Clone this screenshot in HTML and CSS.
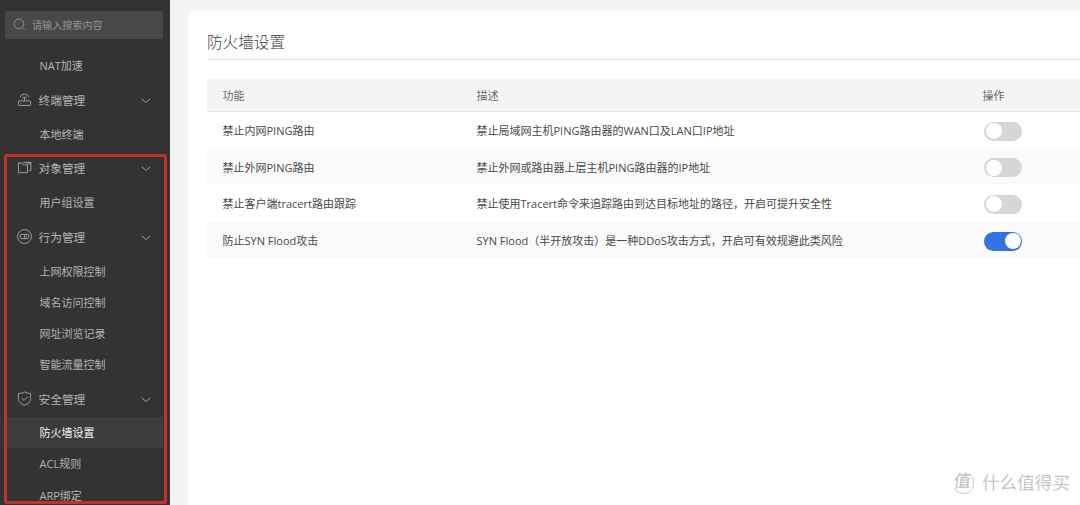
FILE: index.html
```html
<!DOCTYPE html>
<html lang="zh-CN">
<head>
<meta charset="utf-8">
<title>防火墙设置</title>
<link rel="stylesheet" href="styles.css">
</head>
<body>
<div class="app">
  <aside class="sidebar">
    <div class="search">
      <svg class="search-icon" viewBox="0 0 14 14"><circle cx="6.4" cy="6.4" r="5.2"/><path d="M10.100 10.300 12.600 12.900"/></svg>
      <span>请输入搜索内容</span>
    </div>
    <nav class="menu">
      <a class="item">NAT加速</a>
      <div class="group">
        <svg class="icon" viewBox="0 0 16 16"><rect x="1.500" y="9.500" width="13" height="4.800" rx="1"/><path d="M8 9.500V6M3.300 5.500a5 5 0 0 1 9.400 0M5.500 7a2.800 2.800 0 0 1 5 0M4 12h.8"/></svg>
        <span class="label">终端管理</span>
        <svg class="chevron" viewBox="0 0 10 6"><path d="m.7.8 4.3 3.700L9.300.8"/></svg>
      </div>
      <a class="item">本地终端</a>
      <div class="group">
        <svg class="icon" viewBox="0 0 16 16"><path d="M1.500 3.200h3.600l1.500 2h4.600v8.300H1.500zM6.500 2.500h8.300v8.800h-1.600M10 2.500l1.200 1.600h3.600"/></svg>
        <span class="label">对象管理</span>
        <svg class="chevron" viewBox="0 0 10 6"><path d="m.7.8 4.3 3.700L9.300.8"/></svg>
      </div>
      <a class="item">用户组设置</a>
      <div class="group">
        <svg class="icon" viewBox="0 0 16 16"><circle cx="8" cy="8" r="7.400"/><rect x="3.300" y="5.700" width="9.400" height="4.600" rx="2"/><path d="M8.200 5.700v4.600M10.300 7.200v1.600"/></svg>
        <span class="label">行为管理</span>
        <svg class="chevron" viewBox="0 0 10 6"><path d="m.7.8 4.3 3.700L9.300.8"/></svg>
      </div>
      <a class="item">上网权限控制</a>
      <a class="item">域名访问控制</a>
      <a class="item">网址浏览记录</a>
      <a class="item">智能流量控制</a>
      <div class="group">
        <svg class="icon" viewBox="0 0 16 16"><path d="M8 .9c1.800 1.200 4 1.700 6.500 1.700v5.600c0 3.200-2.500 5.400-6.500 7-4-1.600-6.500-3.800-6.500-7V2.600C4 2.600 6.200 2.100 8 .9zM4.900 7.500l2.600 2.500 4.200-4.200"/></svg>
        <span class="label">安全管理</span>
        <svg class="chevron" viewBox="0 0 10 6"><path d="m.7.8 4.3 3.700L9.300.8"/></svg>
      </div>
      <a class="item active">防火墙设置</a>
      <a class="item">ACL规则</a>
      <a class="item">ARP绑定</a>
    </nav>
    <div class="highlight"></div>
  </aside>
  <main class="content">
    <section class="panel">
      <h1 class="title">防火墙设置</h1>
      <div class="table">
        <div class="row head"><span>功能</span><span>描述</span><span>操作</span></div>
        <div class="row"><span>禁止内网PING路由</span><span>禁止局域网主机PING路由器的WAN口及LAN口IP地址</span><i class="switch"></i></div>
        <div class="row alt"><span>禁止外网PING路由</span><span>禁止外网或路由器上层主机PING路由器的IP地址</span><i class="switch"></i></div>
        <div class="row"><span>禁止客户端tracert路由跟踪</span><span>禁止使用Tracert命令来追踪路由到达目标地址的路径，开启可提升安全性</span><i class="switch"></i></div>
        <div class="row alt"><span>防止SYN Flood攻击</span><span>SYN Flood（半开放攻击）是一种DDoS攻击方式，开启可有效规避此类风险</span><i class="switch on"></i></div>
      </div>
    </section>
  </main>
  <div class="watermark">
    <span class="seal"><svg class="seal-ring" viewBox="0 0 24 24"><path d="M2.500 18.500A10.600 10.600 0 0 0 22.500 13Q23 7 18.500 3.200"/></svg><b>值</b></span>
    <span>什么值得买</span>
  </div>
</div>
</body>
</html>
```
FILE: styles.css
```css
* { box-sizing: border-box; }
body {
  margin: 0;
  font-family: "Open Sans", "Noto Sans CJK SC", sans-serif;
  font-size: 11px;
  overflow: hidden;
}
svg { fill: none; stroke: currentColor; flex: none; }
.app {
  position: relative;
  display: flex;
  width: 1080px;
  height: 505px;
  overflow: hidden;
  background: #f4f4f4;
}
.sidebar {
  position: relative;
  flex: none;
  width: 170px;
  padding: 11px 6px 0 5px;
  background: #333;
  color: #b4b4b4;
  overflow: hidden;
}
.search {
  display: flex;
  align-items: center;
  gap: 6px;
  width: 158px;
  height: 28px;
  padding: 0 0 2px 8px;
  border-radius: 2px;
  background: #484848;
  color: #969696;
  font-size: 10.1px;
}
.search-icon { width: 13px; height: 13px; margin-top: 1px; }
.menu { padding: 10.6px 0 0 2px; }
.item, .group { display: flex; align-items: center; white-space: nowrap; }
.item { width: 156px; height: 31.1px; padding-left: 32.5px; }
.item.active { background: #3c3c3c; color: #f5f5f5; }
.group { height: 37.4px; padding-left: 10.5px; font-size: 11.7px; }
.icon { width: 15px; height: 15px; margin: 0 6.5px 0 -.5px; color: #a8a8a8; }
.label { flex: none; width: 102.5px; }
.chevron { width: 10px; height: 6px; margin-top: 3px; color: #a0a0a0; }
.highlight {
  position: absolute;
  left: 4px;
  top: 154px;
  width: 163px;
  height: 350px;
  border: 3px solid #c4302b;
  border-radius: 3px;
}
.content { flex: 1; padding: 11px 0 0 18px; }
.panel {
  height: 494px;
  padding: 12px 0 0 19px;
  border-top-left-radius: 6px;
  background: #fff;
}
.title {
  height: 37px;
  margin: 0 0 19px;
  border-bottom: 1px solid #e2e2e2;
  color: #3c3c3c;
  font-size: 15.6px;
  font-weight: 300;
  line-height: 38px;
}
.row {
  display: grid;
  grid-template-columns: 254px 506px auto;
  align-items: center;
  height: 36.6px;
  padding-left: 15.5px;
  color: #484848;
  white-space: nowrap;
}
.row.head {
  height: 33px;
  background: #f4f4f4;
  border-bottom: 1px solid #e4e4e4;
  color: #6a6a6a;
}
.row.alt { background: #fafafa; }
.switch {
  width: 38px;
  height: 19px;
  margin: 2px 0 0 1.5px;
  padding: 1.5px;
  border-radius: 10px;
  background: #d6d6d6;
}
.switch::before {
  content: "";
  display: block;
  width: 16px;
  height: 16px;
  border-radius: 50%;
  background: #fff;
}
.switch.on { background: #3272e2; }
.switch.on::before { margin-left: auto; }
.watermark {
  position: absolute;
  right: 10px;
  top: 469px;
  display: flex;
  align-items: center;
  gap: 7px;
  height: 26px;
  color: #c6c6c6;
  font-size: 17.6px;
  line-height: 24px;
  white-space: nowrap;
}
.seal {
  position: relative;
  display: grid;
  place-items: center;
  width: 23px;
  height: 24px;
  font-size: 17px;
}
.seal-ring { position: absolute; inset: 0; width: 23px; height: 24px; }
.seal b { font-weight: 500; transform: translate(-1px, -1px) skewX(-6deg); }
```
